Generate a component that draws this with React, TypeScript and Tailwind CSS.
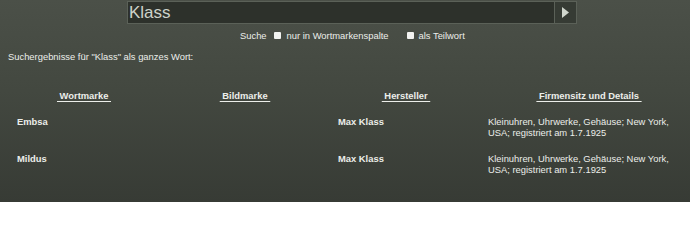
import React from "react";

type Row = {
  wortmarke: string;
  bildmarke: string;
  hersteller: string;
  details: string;
};

const rows: Row[] = [
  {
    wortmarke: "Embsa",
    bildmarke: "",
    hersteller: "Max Klass",
    details: "Kleinuhren, Uhrwerke, Gehäuse; New York, USA; registriert am 1.7.1925"
  },
  {
    wortmarke: "Mildus",
    bildmarke: "",
    hersteller: "Max Klass",
    details: "Kleinuhren, Uhrwerke, Gehäuse; New York, USA; registriert am 1.7.1925"
  }
];

function Checkbox() {
  return <span className="inline-block h-[7px] w-[7px] rounded-[1px] bg-[#f2f3f1]" />;
}

function HeaderCell({ label, className = "" }: { label: string; className?: string }) {
  return (
    <div className={`text-center font-bold ${className}`}>
      <span className="underline underline-offset-[2px]">{"\u00a0" + label + "\u00a0"}</span>
    </div>
  );
}

export default function App() {
  return (
    <div
      className="h-[202px] w-[690px] overflow-hidden bg-[linear-gradient(180deg,#4b5048_0%,#434840_45%,#373b35_100%)] text-[9.4px] leading-[11px] text-[#eceeea]"
      style={{ fontFamily: '"Liberation Sans", Arial, sans-serif' }}
    >
      <div className="flex pl-[127px] pt-[1px]">
        <div className="flex h-[23px] w-[428px] items-center border border-[#5b6158] bg-[#2d312b] pl-[1px] text-[17px] leading-none text-[#cdd3ca]">
          Klass
        </div>
        <button
          type="button"
          className="flex h-[23px] w-[22px] items-center justify-center border border-[#5b6158] border-l-0 bg-[#363b34]"
        >
          <svg width="7" height="11" viewBox="0 0 7 11">
            <path d="M0 0 L7 5.5 L0 11 Z" fill="#d0d6cd" />
          </svg>
        </button>
      </div>

      <div className="mt-[6px] flex items-center pl-[240px]">
        <span>Suche</span>
        <span className="ml-[7px] mr-[6px] flex">
          <Checkbox />
        </span>
        <span>nur in Wortmarkenspalte</span>
        <span className="ml-[18px] mr-[5px] flex">
          <Checkbox />
        </span>
        <span>als Teilwort</span>
      </div>

      <p className="mt-[10px] pl-[8px]">Suchergebnisse für "Klass" als ganzes Wort:</p>

      <div className="mt-[28px] grid grid-cols-[152px_170px_152px_1fr] px-[8px]">
        <HeaderCell label="Wortmarke" />
        <HeaderCell label="Bildmarke" />
        <HeaderCell label="Hersteller" />
        <HeaderCell label="Firmensitz und Details" className="pl-[14px]" />

        {rows.map((row) => (
          <React.Fragment key={row.wortmarke}>
            <div className="mt-[15px] pl-[9px] font-bold">{row.wortmarke}</div>
            <div className="mt-[15px]">{row.bildmarke}</div>
            <div className="mt-[15px] pl-[8px] font-bold">{row.hersteller}</div>
            <div className="mt-[15px] pl-[6px] pr-[6px]">{row.details}</div>
          </React.Fragment>
        ))}
      </div>
    </div>
  );
}
